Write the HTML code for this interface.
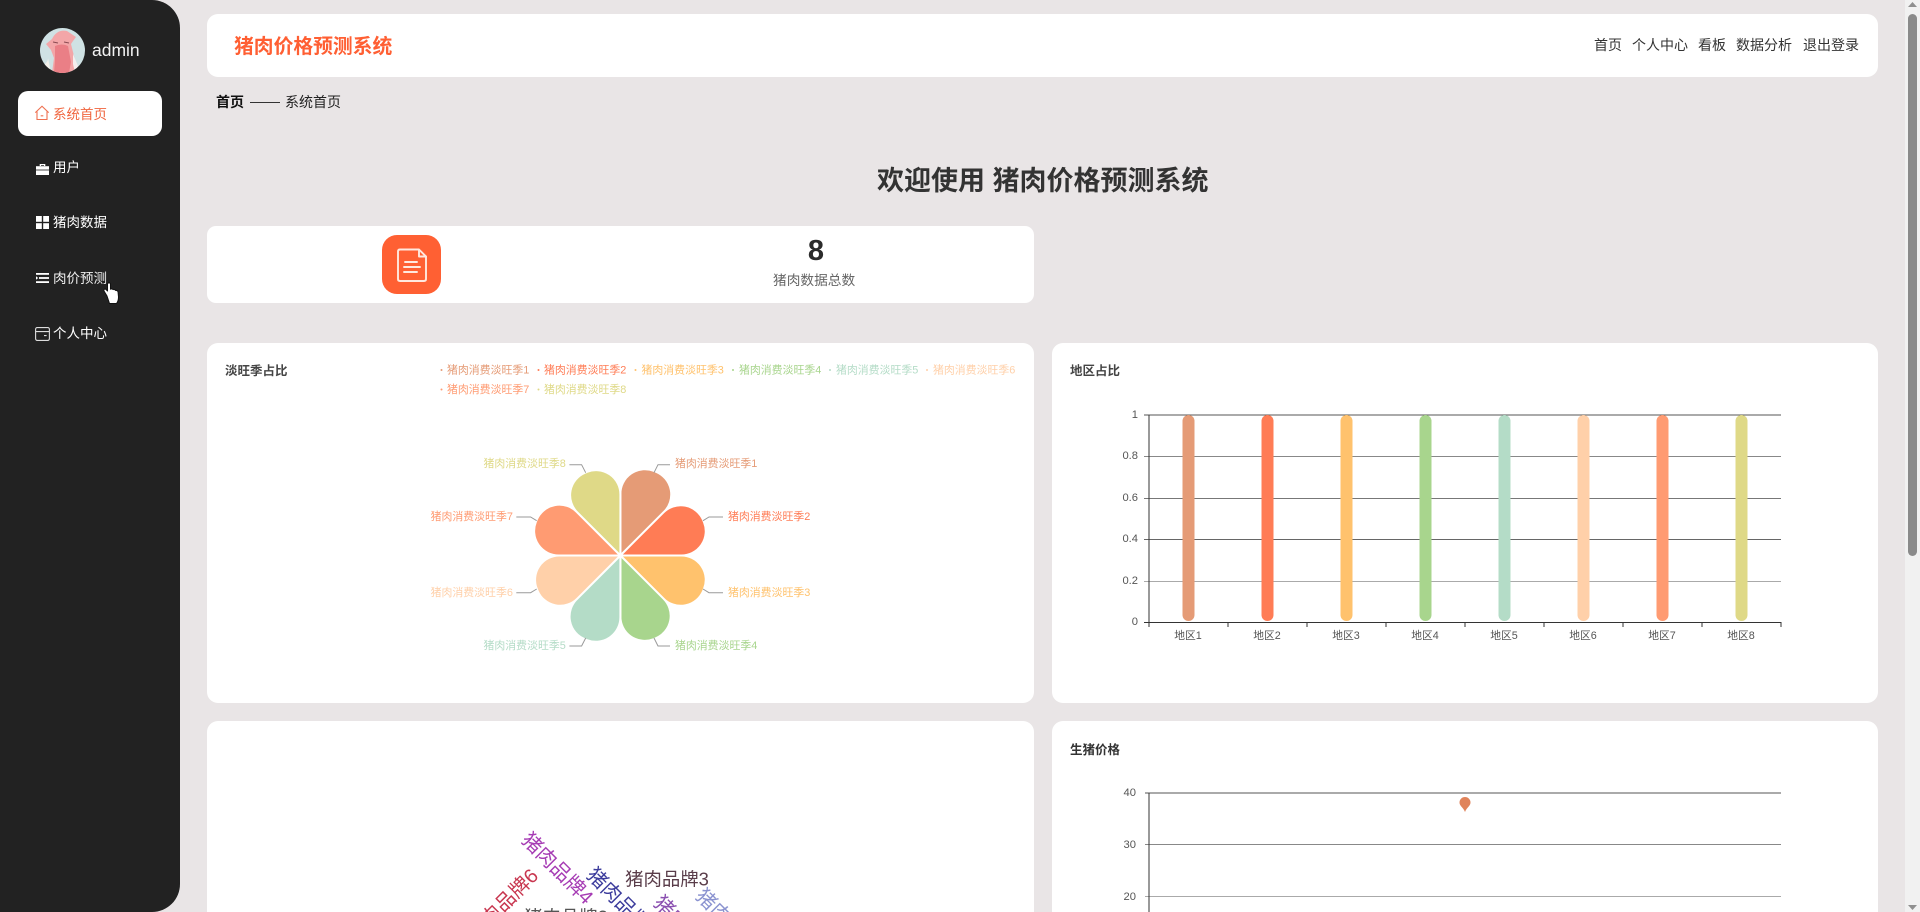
<!DOCTYPE html>
<html lang="zh">
<head>
<meta charset="utf-8">
<title>猪肉价格预测系统</title>
<style>
html,body{margin:0;padding:0;width:1920px;height:912px;overflow:hidden;background:#e9e5e6;}
body{font-family:"Liberation Sans","Noto Sans CJK SC",sans-serif;position:relative;}
.a{position:absolute;}
.t{position:absolute;white-space:nowrap;line-height:20px;height:20px;}
.card{position:absolute;background:#fff;border-radius:11px;}
#side{position:absolute;left:0;top:0;width:180px;height:912px;background:#222;border-radius:0 28px 28px 0;}
.m{color:#fff;font-size:13.5px;left:53px;}
.n{color:#333;font-size:14px;top:35px;}
svg text{font-family:"Liberation Sans","Noto Sans CJK SC",sans-serif;}
</style>
</head>
<body>
<div id="side"></div>

<!-- avatar -->
<svg class="a" style="left:40px;top:28px" width="45" height="45" viewBox="0 0 45 45">
<defs><clipPath id="c"><circle cx="22.5" cy="22.5" r="22.5"/></clipPath></defs>
<g clip-path="url(#c)">
<rect width="45" height="45" fill="#cfe2e4"/>
<path d="M6 16 L12 11 Q17 1 27 3 L36 9 L33 13 L31 16 L36 36 L33 45 L12 45 L14 30 L11 22 Z" fill="#f3a6a8"/>
<path d="M15 18 Q22 15 28 18 L31 34 L29 45 L14 45 L15 32 Z" fill="#ea7f86"/>
<path d="M0 38 Q8 36 8 30 L11 45 L0 45 Z" fill="#f3f0ea"/>
<path d="M33 26 L38 38 L35 45 L33 36 Z" fill="#f4eeee"/>
<path d="M13 14 l5 1 M24 14 l5 1" stroke="#8a4a52" stroke-width="1"/>
</g>
</svg>
<div class="t" style="left:92px;top:40px;color:#f2f2f2;font-size:17.5px;">admin</div>

<!-- active menu -->
<div class="a" style="left:18px;top:91px;width:144px;height:45px;background:#fff;border-radius:10px;"></div>
<svg class="a" style="left:34px;top:105px" width="16" height="16" viewBox="0 0 16 16" fill="none" stroke="#ee7050" stroke-width="1.1">
<path d="M1.3 7.6 L8 1.2 L14.7 7.6 M3 6.5 V14.5 H13 V6.5 M6.7 10.8 H9.3"/>
</svg>
<div class="t m" style="top:105px;color:#f0653e;">系统首页</div>

<!-- briefcase -->
<svg class="a" style="left:36px;top:163px" width="13" height="12" viewBox="0 0 13 12" fill="#fff">
<path d="M3.7 3 V1 H9.3 V3 H8 V2.2 H5 V3 Z"/><rect x="0" y="3.2" width="13" height="3.4"/><rect x="0" y="7.4" width="13" height="4.6"/>
</svg>
<div class="t m" style="top:158px;">用户</div>

<!-- grid -->
<svg class="a" style="left:36px;top:216px" width="13" height="13" viewBox="0 0 13 13" fill="#fff">
<rect width="5.8" height="5.8"/><rect x="7.2" width="5.8" height="5.8"/><rect y="7.2" width="5.8" height="5.8"/><rect x="7.2" y="7.2" width="5.8" height="5.8"/>
</svg>
<div class="t m" style="top:213px;">猪肉数据</div>

<!-- list -->
<svg class="a" style="left:36px;top:273px" width="13" height="10" viewBox="0 0 13 10" fill="#fff">
<rect width="13" height="1.8"/><rect x="3" y="4.1" width="10" height="1.8"/><rect y="8.2" width="13" height="1.8"/><path d="M0 3.2 L2.2 5 L0 6.8 Z"/>
</svg>
<div class="t m" style="top:268.5px;color:#eee;">肉价预测</div>

<!-- panel -->
<svg class="a" style="left:35px;top:327px" width="15" height="14" viewBox="0 0 15 14" fill="none" stroke="#ddd" stroke-width="1.1">
<rect x=".6" y=".6" width="13.8" height="12.8" rx="1.6"/><path d="M.6 4.6 H14.4 M9 8.6 H11.6"/>
</svg>
<div class="t m" style="top:324px;">个人中心</div>

<!-- header -->
<div class="card" style="left:207px;top:14px;width:1671px;height:63px;"></div>
<div class="t" style="left:234px;top:37px;color:#ff5f33;font-size:19.8px;font-weight:bold;">猪肉价格预测系统</div>
<div class="t n" style="left:1594px;">首页</div>
<div class="t n" style="left:1632px;">个人中心</div>
<div class="t n" style="left:1698px;">看板</div>
<div class="t n" style="left:1736px;">数据分析</div>
<div class="t n" style="left:1803px;">退出登录</div>

<!-- breadcrumb -->
<div class="t" style="left:216px;top:92px;font-size:14px;font-weight:bold;color:#111;">首页</div>
<div class="a" style="left:250px;top:102px;width:30px;height:1px;background:#333;"></div>
<div class="t" style="left:285px;top:92px;font-size:14px;color:#222;">系统首页</div>

<!-- welcome -->
<div class="t" style="left:877px;top:171px;font-size:27px;font-weight:bold;color:#333;">欢迎使用 猪肉价格预测系统</div>

<!-- stat -->
<div class="card" style="left:207px;top:226px;width:827px;height:77px;border-radius:9px;"></div>
<div class="a" style="left:382px;top:235px;width:59px;height:59px;border-radius:15px;background:#ff6033;"></div>
<svg class="a" style="left:382px;top:235px" width="59" height="59" viewBox="0 0 59 59" fill="none" stroke="#ffe9df" stroke-width="1.9" stroke-linecap="round" stroke-linejoin="round">
<path d="M18 14.5 H37 L44 21.5 V44 Q44 46 42 46 H18 Q16 46 16 44 V16.5 Q16 14.5 18 14.5 Z"/>
<path d="M37 15 V21.5 H44"/>
<path d="M23 27 H35 M22 32 H38 M22 37 H35"/>
</svg>
<div class="t" style="left:799px;top:241px;width:34px;text-align:center;font-size:29px;font-weight:bold;color:#2b2b2b;">8</div>
<div class="t" style="left:773px;top:271px;font-size:13.7px;color:#666;">猪肉数据总数</div>

<!-- cards -->
<div class="card" style="left:207px;top:343px;width:827px;height:360px;"></div>
<div class="card" style="left:1052px;top:343px;width:826px;height:360px;"></div>
<div class="card" style="left:207px;top:721px;width:827px;height:191px;border-radius:11px 11px 0 0;"></div>
<div class="card" style="left:1052px;top:721px;width:826px;height:191px;border-radius:11px 11px 0 0;"></div>

<!-- charts -->
<svg class="a" style="left:0;top:0;overflow:hidden" width="1920" height="912" viewBox="0 0 1920 912">
<defs>
<path id="p" d="M0 0 L0 -67.82 A27 27 0 0 1 36.99 -92.9 A100 100 0 0 1 39.55 -91.85 A27 27 0 0 1 47.96 -47.96 Z"/>
</defs>

<!-- chart 1 title and legend -->
<text x="225" y="375" font-size="12.5" font-weight="bold" fill="#444">淡旺季占比</text>
<g font-size="10.9">
<circle cx="441.5" cy="370" r="1" fill="#e59b76"/><text x="447" y="373.5" fill="#e59b76">猪肉消费淡旺季1</text>
<circle cx="538.5" cy="370" r="1" fill="#ff7c55"/><text x="544" y="373.5" fill="#ff7c55">猪肉消费淡旺季2</text>
<circle cx="635.5" cy="370" r="1" fill="#ffc26d"/><text x="641.5" y="373.5" fill="#ffc26d">猪肉消费淡旺季3</text>
<circle cx="733" cy="370" r="1" fill="#a8d58d"/><text x="739" y="373.5" fill="#a8d58d">猪肉消费淡旺季4</text>
<circle cx="830" cy="370" r="1" fill="#b4dcc7"/><text x="836" y="373.5" fill="#b4dcc7">猪肉消费淡旺季5</text>
<circle cx="927" cy="370" r="1" fill="#ffd0a9"/><text x="933" y="373.5" fill="#ffd0a9">猪肉消费淡旺季6</text>
<circle cx="441.5" cy="389.5" r="1" fill="#ff9b72"/><text x="447" y="393" fill="#ff9b72">猪肉消费淡旺季7</text>
<circle cx="538.5" cy="389.5" r="1" fill="#dfd987"/><text x="544" y="393" fill="#dfd987">猪肉消费淡旺季8</text>
</g>

<!-- rose pie -->
<g stroke="#fff" stroke-width="2.2" stroke-linejoin="round">
<use href="#p" transform="translate(620.4 555.5) rotate(0) scale(.91)" fill="#e59b76"/>
<use href="#p" transform="translate(620.4 555.5) rotate(45) scale(.9)" fill="#ff7c55"/>
<use href="#p" transform="translate(620.4 555.5) rotate(90) scale(.9)" fill="#ffc26d"/>
<use href="#p" transform="translate(620.4 555.5) rotate(135) scale(.9)" fill="#a8d58d"/>
<use href="#p" transform="translate(620.4 555.5) rotate(180) scale(.91)" fill="#b4dcc7"/>
<use href="#p" transform="translate(620.4 555.5) rotate(225) scale(.9)" fill="#ffd0a9"/>
<use href="#p" transform="translate(620.4 555.5) rotate(270) scale(.91)" fill="#ff9b72"/>
<use href="#p" transform="translate(620.4 555.5) rotate(315) scale(.9)" fill="#dfd987"/>
</g>
<g fill="none" stroke="#9a9a9a" stroke-width="1">
<path d="M654 472.7 L658 464.7 H670"/>
<path d="M703 520.7 L709 517 H723"/>
<path d="M703 589 L709 592.7 H723"/>
<path d="M654 638 L658 646 H670"/>
<path d="M585.7 638 L581.6 646 H569.4"/>
<path d="M536.7 589 L530.6 592.7 H516.3"/>
<path d="M536.7 520.7 L530.6 517 H516.3"/>
<path d="M585.7 472.7 L581.6 464.7 H569.4"/>
</g>
<g font-size="10.9">
<text x="675" y="467" fill="#e59b76">猪肉消费淡旺季1</text>
<text x="728" y="520" fill="#ff7c55">猪肉消费淡旺季2</text>
<text x="728" y="596" fill="#ffc26d">猪肉消费淡旺季3</text>
<text x="675" y="649" fill="#a8d58d">猪肉消费淡旺季4</text>
<text x="483.5" y="649" fill="#b4dcc7">猪肉消费淡旺季5</text>
<text x="430.6" y="596" fill="#ffd0a9">猪肉消费淡旺季6</text>
<text x="430.6" y="520" fill="#ff9b72">猪肉消费淡旺季7</text>
<text x="483.5" y="467" fill="#dfd987">猪肉消费淡旺季8</text>
</g>

<!-- bar chart -->
<text x="1070" y="375" font-size="12.5" font-weight="bold" fill="#444">地区占比</text>
<g stroke-width="1" shape-rendering="crispEdges">
<path d="M1144 415 H1781" stroke="#555"/>
<path d="M1144 456.5 H1781" stroke="#888"/>
<path d="M1144 498.5 H1781" stroke="#777"/>
<path d="M1144 539.5 H1781" stroke="#666"/>
<path d="M1144 581.5 H1781" stroke="#aaa"/>
<path d="M1144 622.5 H1781 M1149 415 V623" stroke="#333"/>
<path d="M1149 622 v5 M1228 622 v5 M1307 622 v5 M1386 622 v5 M1465 622 v5 M1544 622 v5 M1623 622 v5 M1702 622 v5 M1781 622 v5" stroke="#333"/>
</g>
<g>
<rect x="1182.5" y="415" width="12" height="206" rx="6" fill="#e59b76"/>
<rect x="1261.5" y="415" width="12" height="206" rx="6" fill="#ff7c55"/>
<rect x="1340.5" y="415" width="12" height="206" rx="6" fill="#ffc26d"/>
<rect x="1419.5" y="415" width="12" height="206" rx="6" fill="#a8d58d"/>
<rect x="1498.5" y="415" width="12" height="206" rx="6" fill="#b4dcc7"/>
<rect x="1577.5" y="415" width="12" height="206" rx="6" fill="#ffd0a9"/>
<rect x="1656.5" y="415" width="12" height="206" rx="6" fill="#ff9b72"/>
<rect x="1735.5" y="415" width="12" height="206" rx="6" fill="#dfd987"/>
</g>
<g font-size="11.2" fill="#555" text-anchor="end">
<text x="1138" y="418">1</text>
<text x="1138" y="459">0.8</text>
<text x="1138" y="501">0.6</text>
<text x="1138" y="542">0.4</text>
<text x="1138" y="584">0.2</text>
<text x="1138" y="625">0</text>
</g>
<g font-size="10.8" fill="#555" text-anchor="middle">
<text x="1188" y="639">地区1</text>
<text x="1267" y="639">地区2</text>
<text x="1346" y="639">地区3</text>
<text x="1425" y="639">地区4</text>
<text x="1504" y="639">地区5</text>
<text x="1583" y="639">地区6</text>
<text x="1662" y="639">地区7</text>
<text x="1741" y="639">地区8</text>
</g>

<!-- line chart -->
<text x="1070" y="754" font-size="12.5" font-weight="bold" fill="#333">生猪价格</text>
<g stroke-width="1" shape-rendering="crispEdges">
<path d="M1145 793 H1781" stroke="#555"/>
<path d="M1145 844.5 H1781" stroke="#888"/>
<path d="M1145 896.5 H1781" stroke="#aaa"/>
<path d="M1149 793 V912" stroke="#333"/>
</g>
<g font-size="11.2" fill="#555" text-anchor="end">
<text x="1136" y="796">40</text>
<text x="1136" y="848">30</text>
<text x="1136" y="900">20</text>
</g>
<path d="M1465 812 C1463 807 1459.5 806 1459.5 802.5 A5.5 5.5 0 0 1 1470.5 802.5 C1470.5 806 1467 807 1465 812 Z" fill="#e0835a"/>

<!-- word cloud -->
<g font-size="20" text-anchor="middle" dominant-baseline="central">
<text transform="translate(557 869) rotate(45)" fill="#a63cb4">猪肉品牌4</text>
<text transform="translate(503 905) rotate(-45)" fill="#c8364f">猪肉品牌6</text>
<text transform="translate(622 904) rotate(45)" fill="#3c3c9c">猪肉品牌1</text>
<text transform="translate(689 932) rotate(45)" fill="#8a4fb0">猪肉品牌5</text>
<text transform="translate(731 925) rotate(45)" fill="#8b93d0">猪肉品牌7</text>
<text x="667" y="879" font-size="18.4" fill="#5a3d4a">猪肉品牌3</text>
<text x="566" y="917" font-size="18.4" fill="#555">猪肉品牌2</text>
</g>

<!-- hand cursor -->
<path d="M107 296 L104 291 Q103.5 289 105.5 289 L107.5 291 V283.8 Q109 281.8 110.5 283.8 V289.2 Q112 288.4 113 289.6 Q114.6 289 115.4 290.4 Q117 290 118 291.6 L118.5 297 Q118.5 301 116.5 303.5 H109.5 Z" fill="#fff" stroke="#111" stroke-width="1" stroke-linejoin="round"/>
</svg>

<!-- scrollbar -->
<div class="a" style="left:1905px;top:0;width:15px;height:912px;background:#f1f1f1;"></div>
<div class="a" style="left:1908px;top:14px;width:9px;height:542px;background:#8a8a8a;border-radius:5px;"></div>
<svg class="a" style="left:1905px;top:0" width="15" height="912" viewBox="0 0 15 912" fill="#8f8f8f">
<path d="M7.5 2 L12 7 H3 Z"/><path d="M7.5 910 L12 905 H3 Z"/>
</svg>
</body>
</html>
